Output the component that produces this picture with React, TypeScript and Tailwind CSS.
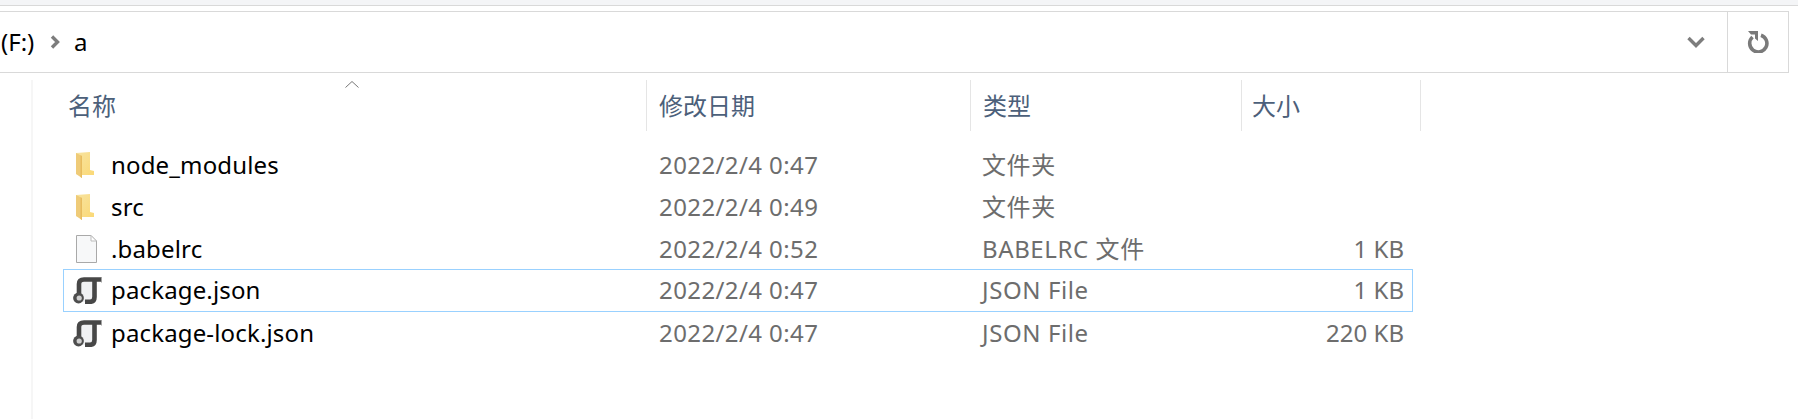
const font = "font-['Noto_Sans','Noto_Sans_CJK_SC',sans-serif]";

function FolderIcon() {
  return (
    <svg width="18" height="26" viewBox="0 0 18 26" className="shrink-0 ml-[12px]">
      <defs>
        <linearGradient id="fold" x1="0" y1="0" x2="1" y2="1">
          <stop offset="0" stopColor="#f7e3a0" />
          <stop offset="1" stopColor="#fbd977" />
        </linearGradient>
      </defs>
      <path d="M0 1 L14 0 L14 18 L18 19 L18 23 L5 23 L0 22 Z" fill="url(#fold)" />
      <path d="M0 1 L6 4 L6 26 L0 22 Z" fill="#efcb78" />
      <path d="M6 4 L6 26 L4.5 25 L4.5 3.2 Z" fill="#e8bc5e" />
    </svg>
  );
}

function FileIcon() {
  return (
    <svg width="21" height="28" viewBox="0 0 21 28" className="shrink-0 ml-[12px]">
      <path d="M0.5 0.5 H15 L20.5 6 V27.5 H0.5 Z" fill="#f7f8f9" stroke="#a9a9a9" />
      <path d="M15 0.5 V6 H20.5 Z" fill="#ffffff" stroke="#bdbdbd" />
    </svg>
  );
}

function ScriptIcon() {
  return (
    <svg width="29" height="28" viewBox="0 0 29 28" className="shrink-0 ml-[9px]">
      <path d="M6 20 V7 C6 4 8 2 11 2 H22 V22 L18 26 H8 Z" fill="#f0f1f3" />
      <path d="M6 19 V8 C6 5 8 3.5 11 3.5 H28 M21.5 3.5 V21 C21.5 24 20 25.8 17 25.8 H12" fill="none" stroke="#474747" strokeWidth="4.6" />
      <path d="M29 1 V6.5" stroke="#474747" strokeWidth="1" />
      <circle cx="5.5" cy="22" r="5.4" fill="#4e4e4e" />
      <circle cx="6.2" cy="22" r="2.6" fill="#cfcfcf" />
    </svg>
  );
}

const rows = [
  { name: 'node_modules', date: '2022/2/4 0:47', type: '文件夹', size: '', icon: 'folder' },
  { name: 'src', date: '2022/2/4 0:49', type: '文件夹', size: '', icon: 'folder' },
  { name: '.babelrc', date: '2022/2/4 0:52', type: 'BABELRC 文件', size: '1 KB', icon: 'file' },
  { name: 'package.json', date: '2022/2/4 0:47', type: 'JSON File', size: '1 KB', icon: 'script', selected: true },
  { name: 'package-lock.json', date: '2022/2/4 0:47', type: 'JSON File', size: '220 KB', icon: 'script' },
];

export default function App() {
  return (
    <div className={`w-[1798px] h-[419px] bg-white overflow-hidden text-[24px] ${font}`}>
      {/* Top strip */}
      <div className="h-[6px] bg-[#f4f5f7] border-b border-[#d9d9d9]" />

      {/* Address bar */}
      <div className="mt-[5px] mr-[9px] h-[62px] flex border-y border-r border-[#d9d9d9]">
        <div className="flex-1 flex items-center pl-[1px] text-black">
          <span className="w-[49px]">(F:)</span>
          <svg width="10" height="14" viewBox="0 0 10 14" className="shrink-0">
            <path d="M2 1.5 L7.5 7 L2 12.5" fill="none" stroke="#7d7d7d" strokeWidth="3.4" />
          </svg>
          <span className="ml-[14px]">a</span>
          <svg width="18" height="12" viewBox="0 0 18 12" className="ml-auto mr-[22px] shrink-0">
            <path d="M1.5 2 L9 9.5 L16.5 2" fill="none" stroke="#7d7d7d" strokeWidth="3.4" />
          </svg>
        </div>
        <div className="w-[61px] flex items-center justify-center border-l border-[#d9d9d9]">
          <svg width="22" height="22" viewBox="0 0 22 22">
            <path d="M5.5 6 A8.6 8.6 0 1 0 14 4.2" fill="none" stroke="#7a7a7a" strokeWidth="3.6" />
            <path d="M1 0 H11 V10 L8 7.5 V3.4 H4 Z" fill="#7a7a7a" />
          </svg>
        </div>
      </div>

      {/* Listing */}
      <div className="mt-[7px] ml-[31px] h-[339px] border-l-2 border-[#f6f6f6] pl-[30px]">
        <div className="relative w-[1358px] h-[51px] grid grid-cols-[583px_324px_271px_180px] text-[#4c607a] leading-[51px]">
          <svg width="14" height="7" viewBox="0 0 14 7" className="absolute left-[282px] top-[1px]">
            <path d="M0.5 6.5 L7 0.5 L13.5 6.5" fill="none" stroke="#777777" />
          </svg>
          <div className="pl-[5px]">名称</div>
          <div className="pl-[12px] border-l border-[#e5e5e5]">修改日期</div>
          <div className="pl-[12px] border-l border-[#e5e5e5]">类型</div>
          <div className="pl-[10px] border-x border-[#e5e5e5]">大小</div>
        </div>

        <div className="mt-[13px] w-[1350px]">
          {rows.map((row) => (
            <div
              key={row.name}
              className={`grid grid-cols-[583px_324px_271px_172px] items-center border pb-[1px] ${row.selected ? 'h-[43px] -mt-[1px] border-[#99d1ff]' : 'h-[42px] border-transparent'}`}
            >
              <div className="flex items-center text-black">
                <div className="w-[47px] flex shrink-0">
                  {row.icon === 'folder' ? <FolderIcon /> : row.icon === 'file' ? <FileIcon /> : <ScriptIcon />}
                </div>
                <span className="tracking-[0.15px]">{row.name}</span>
              </div>
              <div className="pl-[12px] text-[#6d6d6d] tracking-[0.4px]">{row.date}</div>
              <div className="pl-[11px] text-[#6d6d6d] tracking-[0.6px]">{row.type}</div>
              <div className="pr-[10px] text-right text-[#6d6d6d]">{row.size}</div>
            </div>
          ))}
        </div>
      </div>
    </div>
  );
}
